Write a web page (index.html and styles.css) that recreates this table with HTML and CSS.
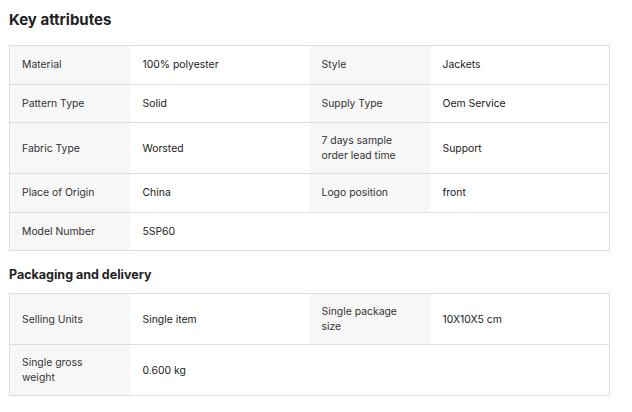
FILE: index.html
```html
<!DOCTYPE html>
<html lang="en">
<head>
  <meta charset="UTF-8" />
  <meta name="viewport" content="width=device-width, initial-scale=1.0"/>
  <title>Key attributes</title>
  <link rel="stylesheet" href="styles.css">
</head>
<body>

<div class="attributes">
  <h2>Key attributes</h2>
  <table>
    <colgroup>
      <col class="col-label"><col class="col-value"><col class="col-label"><col class="col-value">
    </colgroup>
    <tr>
      <td class="label">Material</td>
      <td>100% polyester</td>
      <td class="label">Style</td>
      <td>Jackets</td>
    </tr>
    <tr>
      <td class="label">Pattern Type</td>
      <td>Solid</td>
      <td class="label">Supply Type</td>
      <td>Oem Service</td>
    </tr>
    <tr>
      <td class="label">Fabric Type</td>
      <td>Worsted</td>
      <td class="label">7 days sample order lead time</td>
      <td>Support</td>
    </tr>
    <tr>
      <td class="label">Place of Origin</td>
      <td>China</td>
      <td class="label">Logo position</td>
      <td>front</td>
    </tr>
    <tr>
      <td class="label">Model Number</td>
      <td>5SP60</td>
      <td></td>
      <td></td>
    </tr>
  </table>

  <h3>Packaging and delivery</h3>
  <table>
    <colgroup>
      <col class="col-label"><col class="col-value"><col class="col-label"><col class="col-value">
    </colgroup>
    <tr>
      <td class="label">Selling Units</td>
      <td>Single item</td>
      <td class="label">Single package size</td>
      <td>10X10X5 cm</td>
    </tr>
    <tr>
      <td class="label">Single gross weight</td>
      <td>0.600 kg</td>
      <td></td>
      <td></td>
    </tr>
  </table>
</div>

</body>
</html>
```

FILE: styles.css
```css
body {
  margin: 0;
  padding: 0 9px;
  font-family: Inter, "Noto Sans", sans-serif;
  color: #222;
  background: #fff;
}
.attributes {
  width: 601px;
}
h2 {
  font-size: 15px;
  font-weight: 700;
  margin: 0;
  padding-top: 12px;
  height: 33px;
  line-height: 16px;
}
h3 {
  font-size: 12.5px;
  font-weight: 700;
  margin: 0;
  padding-top: 16px;
  height: 26px;
  line-height: 15px;
}
table {
  width: 601px;
  border-collapse: collapse;
  border: 1px solid #ddd;
  table-layout: fixed;
}
.col-label {
  width: 120px;
}
.col-value {
  width: 180px;
}
tr {
  height: 38.5px;
}
td {
  font-size: 10.4px;
  line-height: 15px;
  padding: 10px 12px 10px 13px;
  border-top: 1px solid #ddd;
  border-bottom: 1px solid #ddd;
  vertical-align: middle;
  color: #1a1a1a;
}
td.label {
  background: #f7f7f7;
  color: #333;
  padding-left: 12px;
  padding-right: 20px;
}
```
